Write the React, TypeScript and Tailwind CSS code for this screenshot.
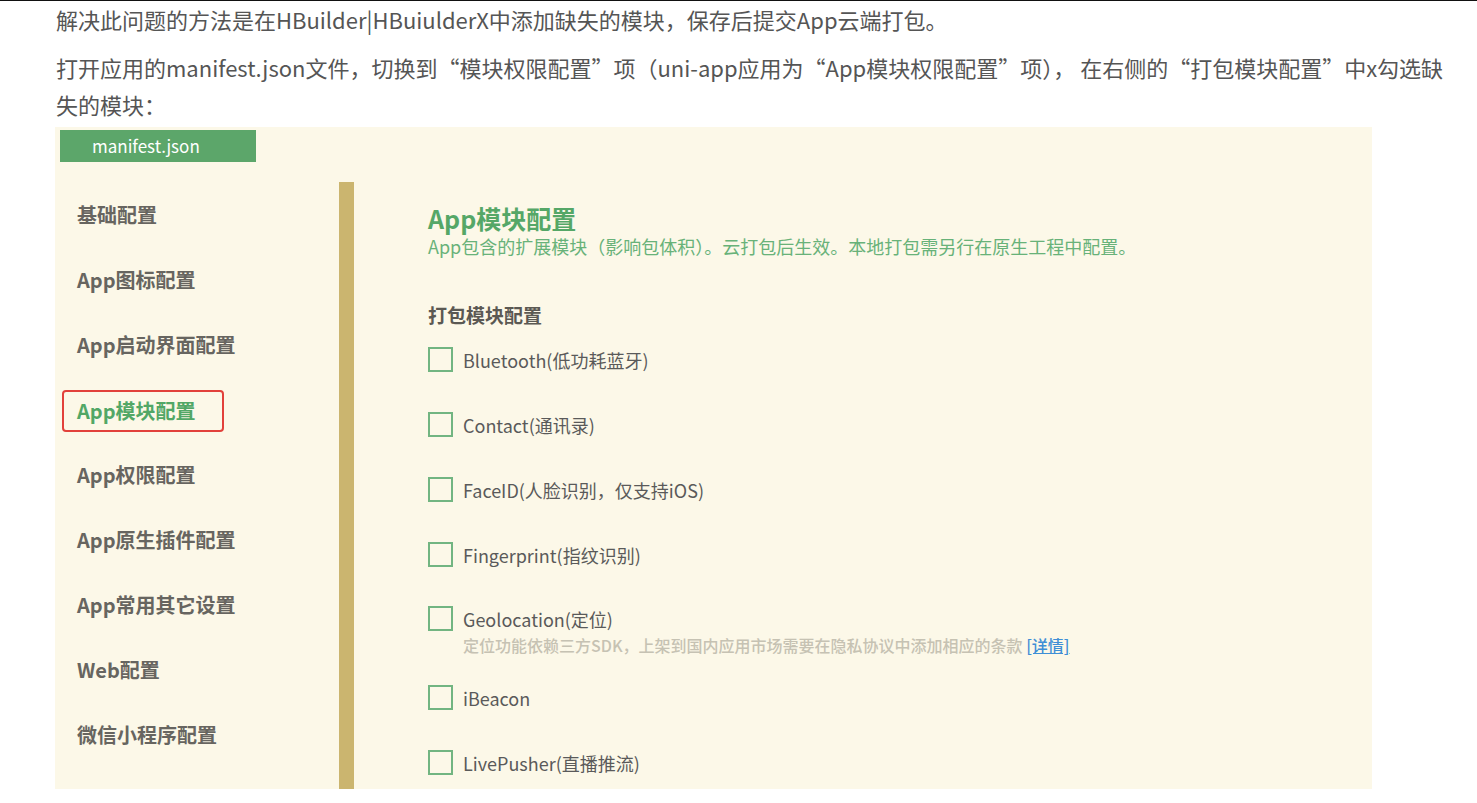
import React from "react";

const FONT = { fontFamily: '"Noto Sans CJK SC", "Noto Sans", sans-serif' };

const sideItems = [
  "基础配置",
  "App图标配置",
  "App启动界面配置",
  "App模块配置",
  "App权限配置",
  "App原生插件配置",
  "App常用其它设置",
  "Web配置",
  "微信小程序配置",
];

type Mod = { label: string; note?: boolean };

const modules: Mod[] = [
  { label: "Bluetooth(低功耗蓝牙)" },
  { label: "Contact(通讯录)" },
  { label: "FaceID(人脸识别，仅支持iOS)" },
  { label: "Fingerprint(指纹识别)" },
  { label: "Geolocation(定位)", note: true },
  { label: "iBeacon" },
  { label: "LivePusher(直播推流)" },
];

function Box() {
  return <span className="block w-[25px] h-[25px] shrink-0 border-2 border-[#72b581]" />;
}

export default function App() {
  return (
    <div className="min-h-screen w-full bg-white border-t border-[#111]" style={FONT}>
      <div className="pl-[56px] text-[22px] leading-[37px] text-[#555]">
        <p>解决此问题的方法是在HBuilder|HBuiulderX中添加缺失的模块，保存后提交App云端打包。</p>
        <p className="mt-[11px] whitespace-nowrap">
          打开应用的manifest.json文件，切换到“模块权限配置”项（uni-app应用为“App模块权限配置”项）， 在右侧的“打包模块配置”中x勾选缺
          <br />
          失的模块：
        </p>
      </div>

      <div className="mt-[4px] ml-[55px] w-[1317px] h-[662px] overflow-hidden bg-[#fcf8e8]">
        <div className="mt-[3px] ml-[5px] w-[196px] h-[32px] bg-[#5ca66a] flex items-center pl-[32px] text-[17px] text-white">
          manifest.json
        </div>

        <div className="mt-[20px] flex h-[607px]">
          <div className="w-[284px] shrink-0">
            {sideItems.map((t) =>
              t === "App模块配置" ? (
                <div key={t} className="h-[65px] flex items-center pl-[7px]">
                  <span className="w-[162px] h-[42px] mt-[3px] flex items-center pl-[13px] border-2 border-[#e2413b] rounded-[4px] text-[20px] font-bold text-[#52a766]">
                    {t}
                  </span>
                </div>
              ) : (
                <div key={t} className="h-[65px] flex items-center pl-[22px] text-[20px] font-bold text-[#676560]">
                  {t}
                </div>
              )
            )}
          </div>

          <div className="w-[15px] shrink-0 bg-[#cbb56f]" />

          <div className="pl-[74px] pt-[20px]">
            <h1 className="text-[25px] leading-[32px] font-bold text-[#55a767]">App模块配置</h1>
            <p className="text-[18px] leading-[24px] text-[#68b279]">
              App包含的扩展模块（影响包体积）。云打包后生效。本地打包需另行在原生工程中配置。
            </p>
            <h2 className="mt-[45px] text-[19px] leading-[24px] font-bold text-[#5b5953]">打包模块配置</h2>

            {modules.map((m) =>
              m.note ? (
                <div key={m.label} className="h-[78px] flex items-start pt-[19px]">
                  <Box />
                  <div className="ml-[10px]">
                    <div className="text-[18px] leading-[24px] text-[#5a5a5a] mt-px">{m.label}</div>
                    <div className="mt-[4px] text-[16px] leading-[20px] font-medium text-[#c6c2b3]">
                      定位功能依赖三方SDK，上架到国内应用市场需要在隐私协议中添加相应的条款{" "}
                      <span className="text-[#3f8fd6] underline">[详情]</span>
                    </div>
                  </div>
                </div>
              ) : (
                <div key={m.label} className="h-[65px] flex items-center">
                  <Box />
                  <span className="ml-[10px] text-[18px] leading-[24px] text-[#5a5a5a]">{m.label}</span>
                </div>
              )
            )}
          </div>
        </div>
      </div>
    </div>
  );
}
